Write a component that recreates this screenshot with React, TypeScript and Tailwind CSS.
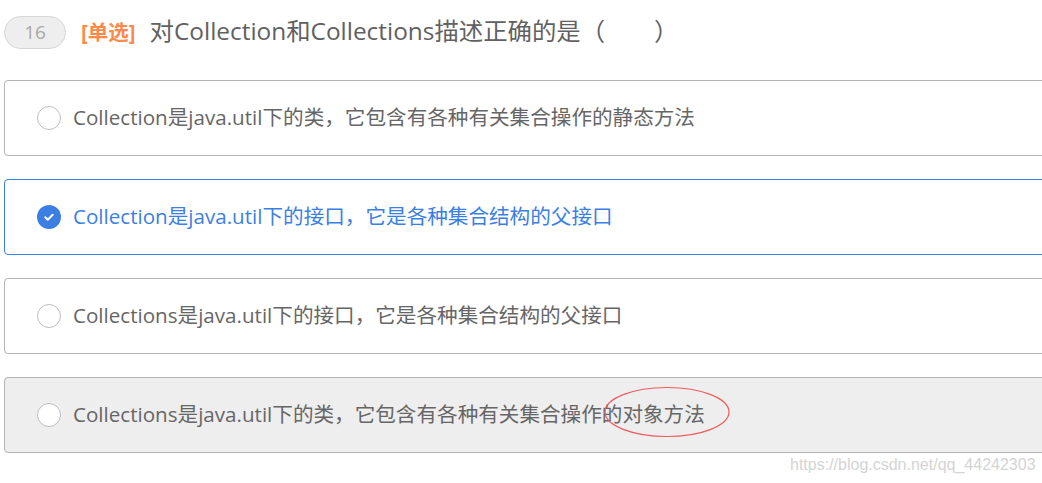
import React from "react";

const options = [
  { text: "Collection是java.util下的类，它包含有各种有关集合操作的静态方法", state: "normal" },
  { text: "Collection是java.util下的接口，它是各种集合结构的父接口", state: "checked" },
  { text: "Collections是java.util下的接口，它是各种集合结构的父接口", state: "normal" },
  { text: "Collections是java.util下的类，它包含有各种有关集合操作的对象方法", state: "disabled" },
];

const font = { fontFamily: '"Open Sans", "Noto Sans CJK SC", sans-serif' };

function Radio({ checked }: { checked: boolean }) {
  if (checked) {
    return (
      <span className="flex h-[24px] w-[24px] shrink-0 items-center justify-center rounded-full bg-[#3b7fe3]">
        <svg width="14" height="14" viewBox="0 0 14 14" fill="none">
          <path d="M3.3 7.3l2.5 2.4 4.9-5" stroke="white" strokeWidth="2" strokeLinecap="round" strokeLinejoin="round" />
        </svg>
      </span>
    );
  }
  return <span className="h-[24px] w-[24px] shrink-0 rounded-full border border-[#b9bec6] bg-white" />;
}

export default function App() {
  return (
    <div className="relative h-[483px] w-[1042px] overflow-hidden bg-white" style={font}>
      <div className="flex items-center pl-[4px] pt-[15px]">
        <span className="flex h-[33px] w-[62px] items-center justify-center rounded-full border border-[#d6d6d6] bg-[#eeeeee] text-[19px] text-[#a8a8a8]">
          16
        </span>
        <span className="ml-[15px] text-[20.5px] font-bold text-[#fb8a4c]">[单选]</span>
        <span className="ml-[14px] -mt-[2px] text-[24.4px] text-[#616161]">对Collection和Collections描述正确的是（　　）</span>
      </div>

      <div className="mt-[30px] flex flex-col gap-[23px] pl-[4px]">
        {options.map((o, i) => (
          <div
            key={i}
            className={
              "relative flex h-[76px] w-[1060px] items-center gap-[12px] rounded-[4px] border pl-[32px] " +
              (o.state === "checked"
                ? "border-[#3b7fe3] bg-white"
                : o.state === "disabled"
                ? "border-[#b4b4b4] bg-[#eeeeee]"
                : "border-[#b4b4b4] bg-white")
            }
          >
            <Radio checked={o.state === "checked"} />
            <span className={"text-[20.6px] " + (o.state === "checked" ? "text-[#3b7fe3]" : "text-[#666666]")}>
              {o.text}
            </span>
          </div>
        ))}
      </div>

      <svg className="absolute left-[603px] top-[385px]" width="128" height="54" viewBox="0 0 128 54" fill="none">
        <ellipse cx="64" cy="27" rx="62" ry="24.5" stroke="#f05a5a" strokeWidth="1.2" />
      </svg>

      <span
        className="absolute left-[790px] top-[453px] text-[16px] text-[#d4d4d4]"
        style={{ fontFamily: '"Liberation Sans", Arial, sans-serif' }}
      >
        https://blog.csdn.net/qq_44242303
      </span>
    </div>
  );
}
